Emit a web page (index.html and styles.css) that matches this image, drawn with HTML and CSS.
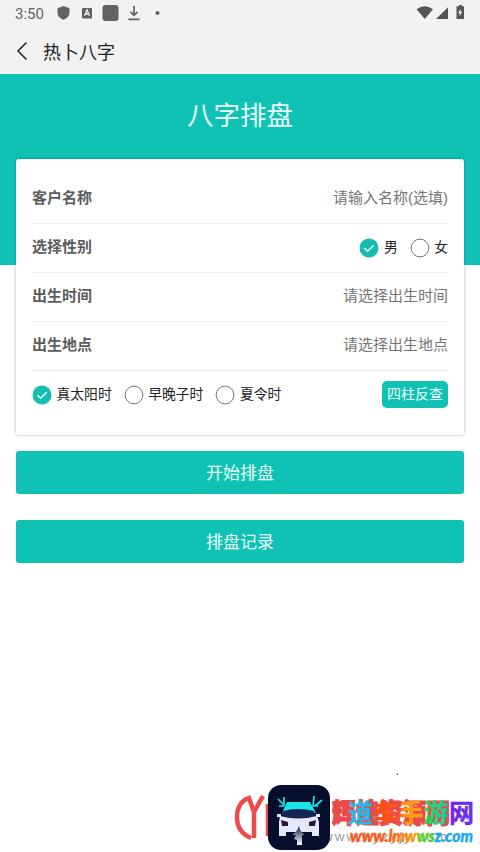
FILE: index.html
```html
<!DOCTYPE html>
<html lang="zh-CN">
<head>
<meta charset="utf-8">
<title>热卜八字</title>
<link rel="stylesheet" href="styles.css">
</head>
<body>
<div class="status">
  <span class="clock">3:50</span>
  <svg class="status-left" width="110" height="20" viewBox="54 3 110 20" fill="#626262">
    <path d="M63.500 6l6 2.200v4.400c0 3.400-2.600 6-6 7.200-3.400-1.200-6-3.800-6-7.200V8.200z"/>
    <rect x="82" y="8" width="10" height="10.500" rx="1"/>
    <path d="M84.500 15.800L87 10l2.500 5.800M85.500 14h3" fill="none" stroke="#f2f2f2" stroke-width="1.300"/>
    <rect x="102.500" y="5" width="16" height="16" rx="3"/>
    <path d="M134 6v9M130.500 11.800l3.500 3.500 3.500-3.500M128.500 19.300h11" fill="none" stroke="#626262" stroke-width="1.700"/>
    <circle cx="157.500" cy="13" r="2"/>
  </svg>
  <svg class="status-right" width="50" height="20" viewBox="416 3 50 20" fill="#555">
    <path d="M416.500 9.300q8.200-6 16.500 0L424.800 19z"/>
    <path d="M448 7.300V19h-12z"/>
    <path d="M457.500 6.200h1.500V5h3v1.200h2V19h-7.500V6.200z"/>
    <path d="M461 8.500l-3 4.500h1.800l-.5 3.500 3-4.800h-1.800z" fill="#f2f2f2"/>
  </svg>
</div>
<header class="nav">
  <svg width="12" height="20" viewBox="0 0 12 20" fill="none" stroke="#222" stroke-width="1.500"><path d="M10.500 1.500L2 10l8.500 8.500"/></svg>
  <span>热卜八字</span>
</header>
<main>
  <section class="hero"><h1>八字排盘</h1></section>
  <section class="card">
    <div class="row"><b>客户名称</b><span class="hint">请输入名称(选填)</span></div>
    <div class="row"><b>选择性别</b>
      <div class="options">
        <span class="option"><svg class="radio" viewBox="0 0 20 20"><circle class="on" cx="10" cy="10" r="9.500"/><path d="M5.500 10.300l3.200 3 6-6"/></svg><span>男</span></span>
        <span class="option"><svg class="radio" viewBox="0 0 20 20"><circle cx="10" cy="10" r="8.900"/></svg><span>女</span></span>
      </div>
    </div>
    <div class="row"><b>出生时间</b><span class="hint">请选择出生时间</span></div>
    <div class="row"><b>出生地点</b><span class="hint">请选择出生地点</span></div>
    <div class="row last">
      <div class="options">
        <span class="option"><svg class="radio" viewBox="0 0 20 20"><circle class="on" cx="10" cy="10" r="9.500"/><path d="M5.500 10.300l3.200 3 6-6"/></svg><span>真太阳时</span></span>
        <span class="option"><svg class="radio" viewBox="0 0 20 20"><circle cx="10" cy="10" r="8.900"/></svg><span>早晚子时</span></span>
        <span class="option"><svg class="radio" viewBox="0 0 20 20"><circle cx="10" cy="10" r="8.900"/></svg><span>夏令时</span></span>
      </div>
      <button class="lookup">四柱反查</button>
    </div>
  </section>
  <button class="action">开始排盘</button>
  <button class="action">排盘记录</button>
</main>
<svg class="mark" width="250" height="92" viewBox="230 760 250 92">
  <circle cx="397.300" cy="774.300" r=".7" fill="#333"/>
  <g fill="none" stroke="#ec4b4b" stroke-width="4.500">
    <path d="M251 838c-10-4-14-11-14-21 0-10 5-17 12-19l5 14M263 796l-9 16v26M268 804v32"/>
  </g>
  <text class="back" x="332" y="823" textLength="118" lengthAdjust="spacingAndGlyphs">辉煌资源网</text>
  <text class="back-url" x="323" y="841" textLength="124" lengthAdjust="spacing">www.hyzyjy.com</text>
  <defs>
    <linearGradient id="name" gradientUnits="userSpaceOnUse" x1="349" x2="474" y1="0" y2="0">
      <stop offset="0" stop-color="#2ab5e8"/><stop offset=".19" stop-color="#2ab5e8"/>
      <stop offset=".22" stop-color="#ff4b12"/><stop offset=".4" stop-color="#ff5b12"/>
      <stop offset=".45" stop-color="#ff9a10"/><stop offset=".58" stop-color="#ffa010"/>
      <stop offset=".62" stop-color="#27d65c"/><stop offset=".78" stop-color="#27c9a0"/>
      <stop offset=".82" stop-color="#7a20e0"/><stop offset="1" stop-color="#5a35f5"/>
    </linearGradient>
    <linearGradient id="url" gradientUnits="userSpaceOnUse" x1="349" x2="474" y1="0" y2="0">
      <stop offset="0" stop-color="#fa5520"/><stop offset=".3" stop-color="#ff5a10"/>
      <stop offset=".53" stop-color="#ff9a08"/><stop offset=".57" stop-color="#60cf20"/>
      <stop offset=".67" stop-color="#50cf40"/><stop offset=".7" stop-color="#15a8e8"/><stop offset="1" stop-color="#25a5f5"/>
    </linearGradient>
    <linearGradient id="road" x2="0" y2="1"><stop stop-color="#101b45"/><stop offset="1" stop-color="#fff"/></linearGradient>
  </defs>
  <text class="name" x="348" y="822" textLength="126" fill="url(#name)" stroke="url(#name)">道车手游网</text>
  <text class="url" x="350" y="842" textLength="123" lengthAdjust="spacingAndGlyphs" fill="url(#url)" stroke="url(#url)">www.lmwwsz.com</text>
  <rect x="268" y="785" width="62" height="65" rx="13" fill="#050e2c"/>
  <path d="M287 802h23l6 11h-34z" fill="#18e5e8"/>
  <path d="M283 811q15-4 31 0l2 8h-35z" fill="#142455"/>
  <path d="M277 814h4v3h-4zM316 814h4v3h-4z" fill="#dce6fa"/>
  <path d="M280 816q18 5 37 0l2 6v14h-7v-4h-26v4h-7v-14z" fill="#e4e9fa"/>
  <path d="M281 820l7 2v4h-6zM316 820l-7 2v4h6z" fill="#281832"/>
  <path d="M299 826q-2 6-7 9h4l-2 4 3 1v5h5v-10h3q-5-3-6-9z" fill="url(#road)"/>
  <path d="M278 799l6 6M284 797v9h-5M322 800l-7 6M314 796l-1 10h5" fill="none" stroke="#18e5e8" stroke-width="1.700"/>
</svg>
</body>
</html>
```
FILE: styles.css
```css
* { box-sizing: border-box; }
body { margin: 0; height: 852px; position: relative; overflow: hidden; background: #fff; font-family: "Liberation Sans", "Noto Sans CJK SC", sans-serif; }
.status { height: 27px; background: #f2f2f2; display: flex; align-items: center; padding: 0 14px 0 15px; }
.clock { width: 39px; font: 15px/26px Roboto, sans-serif; color: #626262; }
.status-left, .status-right { flex: none; margin-top: -1px; }
.status-right { margin-left: auto; }
.nav { height: 46.500px; background: #f2f2f2; display: flex; align-items: center; gap: 15px; padding: 2px 16px 0; font-size: 18px; color: #222; }
.hero { height: 191.500px; background: #0fc2b4; text-align: center; color: #e8fffc; }
h1 { margin: 0; padding-top: 23.500px; font-size: 26.500px; line-height: 38px; font-weight: 400; }
.card { position: relative; margin: -106.500px 16px 16px; height: 276.500px; padding: 16px 16px 0; background: #fff; border-radius: 3px; box-shadow: 0 0 3px rgba(0,0,0,.35); }
.row { height: 49px; display: flex; align-items: center; justify-content: space-between; border-bottom: 1px solid #ececec; font-size: 15px; color: #5c5c5c; }
.row b, .hint { padding-bottom: 4px; }
.hint { color: #757575; }
.last { border: 0; height: 48px; }
.options { display: flex; gap: 12px; }
.option { display: flex; align-items: center; gap: 4.500px; font-size: 13.800px; color: #222; }
.option span { padding-bottom: 3px; }
.radio { width: 20px; height: 20px; fill: none; stroke: #777; stroke-width: 1; }
.radio .on { fill: #13bdb0; stroke: none; }
.radio path { stroke: #e8fffc; stroke-width: 1.500; }
button { font-family: inherit; border: 0; padding: 0 0 3px; background: #0fc2b4; color: #e8fffc; }
.lookup { width: 66px; height: 27px; border-radius: 5px; font-size: 14px; }
.action { display: block; width: 448px; height: 43px; margin: 0 16px 26px; border-radius: 3px; font-size: 17px; }
.mark { position: absolute; left: 230px; top: 760px; }
.back { font: 900 27px "Noto Sans CJK SC", sans-serif; fill: #e94b4b; stroke: #e94b4b; stroke-width: 1.200; }
.back-url { font: 13.500px "Liberation Sans", sans-serif; fill: #999; }
.name { font: 700 25px "Noto Sans CJK SC", sans-serif; stroke-width: .4; }
.url { font: italic 900 16px Lato, sans-serif; stroke-width: .3; }
```
